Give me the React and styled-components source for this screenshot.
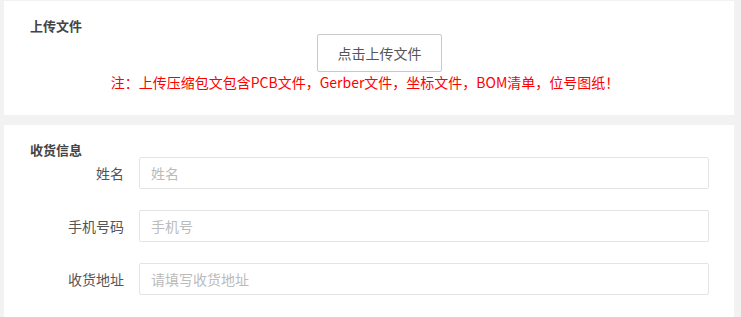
import React from 'react'
import styled, { createGlobalStyle } from 'styled-components'

const GlobalStyle = createGlobalStyle`
  html, body {
    margin: 0;
    padding: 0;
    background: #f2f2f2;
  }
  body {
    font-family: "Noto Sans CJK SC", "Noto Sans", sans-serif;
    font-size: 14px;
    color: #555;
  }
  * { box-sizing: border-box; }
`

const Page = styled.div`
  padding: 1px 7px 0 4px;
  display: flex;
  flex-direction: column;
  gap: 10px;
`

const Panel = styled.section`
  background: #fff;
  padding: ${p => p.$pad};
  min-height: ${p => p.$minH || 'auto'};
`

const Title = styled.h3`
  margin: 0;
  font-size: 13px;
  line-height: 14px;
  font-weight: bold;
  color: #444;
`

const Upload = styled.div`
  display: flex;
  flex-direction: column;
  align-items: center;
  margin-top: 1px;
`

const UploadButton = styled.button`
  width: 125px;
  height: 38px;
  margin-left: 29px;
  background: #fff;
  border: 1px solid #c9c9c9;
  border-radius: 2px;
  font-family: inherit;
  font-size: 14px;
  color: #555;
  cursor: pointer;
`

const Note = styled.p`
  margin: 0;
  color: #ff0000;
  font-size: 14px;
  line-height: 20px;
  white-space: nowrap;
`

const Form = styled.div`
  display: flex;
  flex-direction: column;
  gap: 21px;
`

const Row = styled.label`
  display: grid;
  grid-template-columns: 94px 1fr;
  column-gap: 15px;
  align-items: center;
`

const Label = styled.span`
  text-align: right;
  font-size: 14px;
  color: #555;
`

const Input = styled.input`
  height: 32px;
  border: 1px solid #e4e4e4;
  border-radius: 2px;
  padding: 0 11px;
  font-family: inherit;
  font-size: 14px;
  color: #333;
  outline: none;
  &::placeholder { color: #bbb; }
`

const fields = [
  { label: '姓名', placeholder: '姓名' },
  { label: '手机号码', placeholder: '手机号' },
  { label: '收货地址', placeholder: '请填写收货地址' },
]

export default function App() {
  return (
    <>
      <GlobalStyle />
      <Page>
        <Panel $pad="18px 34px 23px 26px">
          <Title>上传文件</Title>
          <Upload>
            <UploadButton>点击上传文件</UploadButton>
            <Note>注：上传压缩包文包含PCB文件，Gerber文件，坐标文件，BOM清单，位号图纸！</Note>
          </Upload>
        </Panel>
        <Panel $pad="18px 25px 30px 26px" $minH="200px">
          <Title>收货信息</Title>
          <Form>
            {fields.map(f => (
              <Row key={f.label}>
                <Label>{f.label}</Label>
                <Input placeholder={f.placeholder} />
              </Row>
            ))}
          </Form>
        </Panel>
      </Page>
    </>
  )
}
